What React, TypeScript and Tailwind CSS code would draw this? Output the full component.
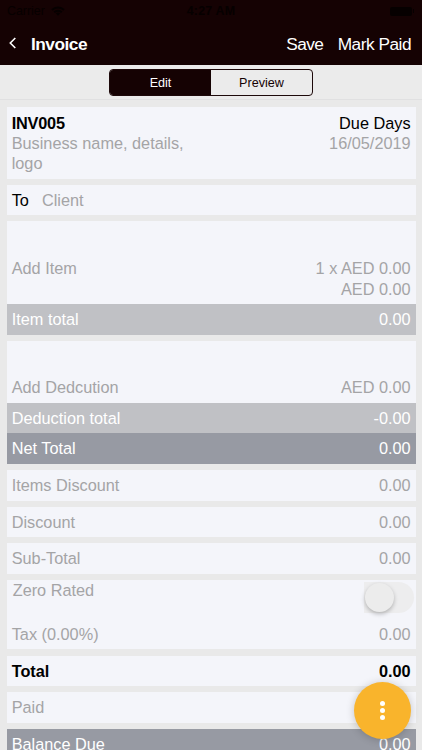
import type { ReactNode } from "react";
import clsx from "clsx";

type RowProps = {
  label: string;
  value: string;
  className?: string;
};

function Row({ label, value, className }: RowProps) {
  return (
    <div
      className={clsx(
        "flex justify-between px-[5px] py-[5.1px]",
        className ?? "text-[#a4a4a6]",
      )}
    >
      <span>{label}</span>
      <span>{value}</span>
    </div>
  );
}

function Card({ children }: { children: ReactNode }) {
  return <section className="bg-[#f4f5fa]">{children}</section>;
}

function StatusBar() {
  return (
    <div className="flex h-[22px] items-center justify-between px-[7px] text-[12.4px] text-[#060000]">
      <div className="flex w-[80px] items-center gap-[6px]">
        <span>Carrier</span>
        <svg width="14" height="10" viewBox="0 0 14 10" fill="none" stroke="currentColor">
          <path d="M1 4a8.5 8.5 0 0 1 12 0M3.2 6.2a5.4 5.4 0 0 1 7.6 0" strokeWidth="2" />
          <path d="M4.9 7.6a3 3 0 0 1 4.2 0L7 9.8z" fill="currentColor" stroke="none" />
        </svg>
      </div>
      <span className="font-bold tracking-[0.2px]">4:27 AM</span>
      <div className="flex w-[80px] items-center justify-end gap-px pr-[1px]">
        <span className="h-[9px] w-[22px] rounded-[2px] bg-[#060000]" />
        <span className="h-[4px] w-[1px] bg-[#060000]" />
      </div>
    </div>
  );
}

function Header() {
  return (
    <header className="h-[65px] shrink-0 bg-[#150203]">
      <StatusBar />
      <div className="flex h-[43px] items-center pr-[11px] pl-[9px] text-[17.3px] text-white">
        <svg
          width="8"
          height="12"
          viewBox="0 0 8 12"
          fill="none"
          stroke="currentColor"
          strokeWidth="1.6"
          className="-mt-[2px]"
        >
          <path d="M6.3 1 1.3 6l5 5" />
        </svg>
        <h1 className="mt-[2px] ml-[14px] text-[17.3px] font-bold tracking-[-0.5px]">Invoice</h1>
        <button className="mt-[2px] ml-auto tracking-[-0.6px]">Save</button>
        <button className="mt-[2px] ml-[14.5px] tracking-[-0.5px]">Mark Paid</button>
      </div>
    </header>
  );
}

function ModeSwitch() {
  return (
    <div className="flex h-[35px] shrink-0 items-center justify-center border-b border-[#e0e0e1] bg-[#ebebeb]">
      <div className="flex h-[27px] w-[204px] overflow-hidden rounded-[4px] border border-[#1d090a] text-[12.6px]">
        <button className="w-[101px] bg-[#150203] pt-[2px] text-white">Edit</button>
        <button className="flex-1 pt-[2px] text-[#150203]">Preview</button>
      </div>
    </div>
  );
}

export default function App() {
  return (
    <div className="relative flex h-[750px] w-[422px] flex-col overflow-hidden bg-[#e9e9e9] font-['Liberation_Sans',Arial,sans-serif]">
      <Header />
      <ModeSwitch />

      <main className="flex flex-col gap-[6.1px] pt-[7.49px] pr-[6.4px] pl-[6.7px] text-[16.3px] leading-[20.36px]">
        <Card>
          <div className="flex justify-between px-[5px] py-[5.1px]">
            <div className="w-[190px] text-[#a4a4a6]">
              <p className="font-bold tracking-[-0.2px] text-black">INV005</p>
              <p>Business name, details, logo</p>
            </div>
            <div className="text-right text-[#a4a4a6]">
              <p className="text-black">Due Days</p>
              <p>16/05/2019</p>
            </div>
          </div>
        </Card>

        <Card>
          <div className="flex gap-[13px] px-[5px] py-[5.1px] text-[#a4a4a6]">
            <span className="text-black">To</span>
            <span>Client</span>
          </div>
        </Card>

        <Card>
          <div className="flex justify-between px-[5px] pt-[36.7px] pb-[5.1px] text-[#a4a4a6]">
            <span>Add Item</span>
            <div className="text-right">
              <p>1 x AED 0.00</p>
              <p>AED 0.00</p>
            </div>
          </div>
          <Row label="Item total" value="0.00" className="bg-[#c0c1c5] text-white" />
        </Card>

        <Card>
          <div className="flex justify-between px-[5px] pt-[36.7px] pb-[5.1px] text-[#a4a4a6]">
            <span>Add Dedcution</span>
            <span>AED 0.00</span>
          </div>
          <Row label="Deduction total" value="-0.00" className="bg-[#c0c1c5] text-white" />
          <Row label="Net Total" value="0.00" className="bg-[#979aa3] text-white" />
        </Card>

        <Card>
          <Row label="Items Discount" value="0.00" />
        </Card>
        <Card>
          <Row label="Discount" value="0.00" />
        </Card>
        <Card>
          <Row label="Sub-Total" value="0.00" />
        </Card>

        <Card>
          <div className="flex h-[39px] justify-between pr-[2px] pl-[6px] text-[#a4a4a6]">
            <span>Zero Rated</span>
            <button
              role="switch"
              aria-checked="false"
              aria-label="Zero Rated"
              className="mt-[2.5px] h-[31px] w-[50px] rounded-l-[3px] rounded-r-full bg-[#ededee] pl-[1px]"
            >
              <span className="block size-[29px] rounded-full bg-[#ececec] shadow-[0_2px_4px_rgba(0,0,0,0.25)]" />
            </button>
          </div>
          <Row label="Tax (0.00%)" value="0.00" />
        </Card>

        <Card>
          <Row label="Total" value="0.00" className="font-bold text-black" />
        </Card>
        <Card>
          <Row label="Paid" value="0.00" />
        </Card>
        <Card>
          <Row label="Balance Due" value="0.00" className="bg-[#979aa3] text-white" />
        </Card>
      </main>

      {/* floating actions button */}
      <button
        aria-label="More actions"
        className="absolute top-[682px] left-[354px] flex size-[57px] flex-col items-center justify-center gap-[2.2px] rounded-full bg-[#f9b42c] shadow-[0_1px_8px_rgba(0,0,0,0.2)]"
      >
        <span className="size-[4.6px] rounded-full bg-white" />
        <span className="size-[4.6px] rounded-full bg-white" />
        <span className="size-[4.6px] rounded-full bg-white" />
      </button>
    </div>
  );
}
